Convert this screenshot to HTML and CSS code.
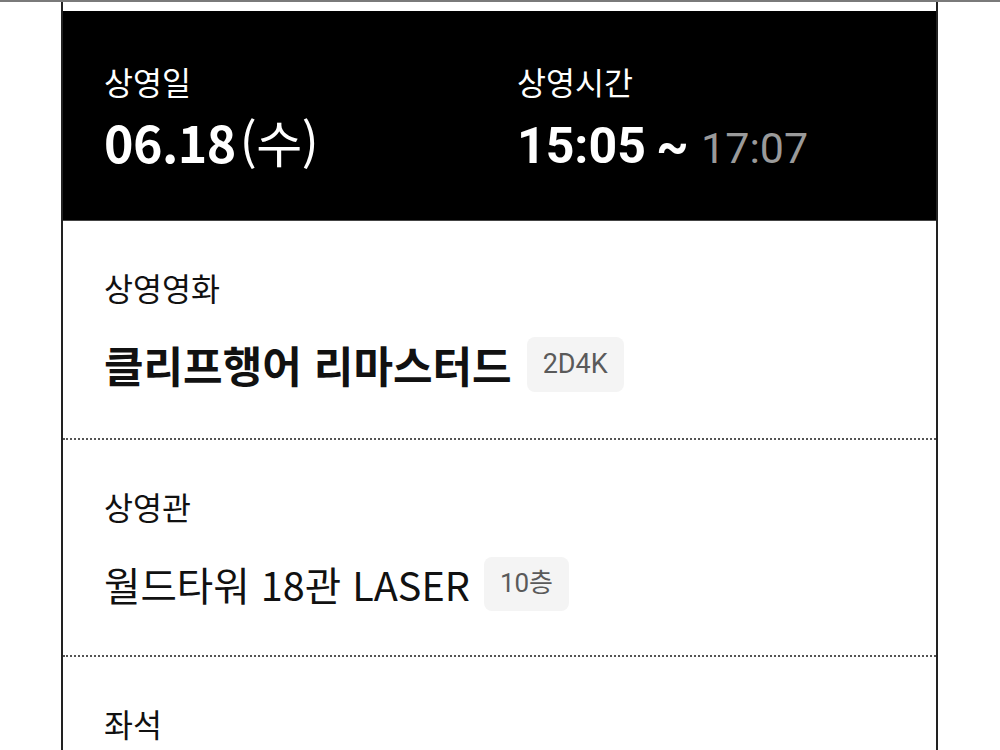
FILE: index.html
```html
<!DOCTYPE html>
<html lang="ko">
<head>
<meta charset="utf-8">
<link rel="stylesheet" href="styles.css">
</head>
<body>
<div class="topline"></div>
<div class="card">
  <div class="hero">
    <div class="hero-col">
      <div class="hero-label">상영일</div>
      <div class="hero-value">06.18<span class="paren">(수)</span></div>
    </div>
    <div class="hero-col">
      <div class="hero-label">상영시간</div>
      <div class="hero-value time">15:05 <span class="tilde">~</span> <span class="end">17:07</span></div>
    </div>
  </div>
  <div class="section dotted">
    <div class="label">상영영화</div>
    <div class="value bold">클리프행어 리마스터드<span class="badge">2D4K</span></div>
  </div>
  <div class="section dotted section-hall">
    <div class="label">상영관</div>
    <div class="value">월드타워 18관 LASER<span class="badge badge-floor">10층</span></div>
  </div>
  <div class="section">
    <div class="label">좌석</div>
  </div>
</div>
</body>
</html>
```
FILE: styles.css
```css
html, body {
  margin: 0;
  padding: 0;
  background: #fff;
  font-family: "Noto Sans CJK KR", "Noto Sans", sans-serif;
  color: #111;
  overflow: hidden;
}
.topline {
  height: 2px;
  background: #7a7a7a;
}
.card {
  margin-left: 61px;
  width: 873px;
  border-left: 2px solid #222;
  border-right: 2px solid #222;
  padding-top: 9px;
  min-height: 800px;
}
.hero {
  background: #000;
  color: #fff;
  display: grid;
  grid-template-columns: 413px 1fr;
  padding: 0 41px;
  height: 209px;
  align-content: start;
  border-bottom: 1px solid #444;
}
.hero-col {
  padding-top: 50px;
}
.hero-label {
  font-size: 31.5px;
  line-height: 40px;
}
.hero-value {
  font-size: 50px;
  font-weight: 700;
  line-height: 66px;
  margin-top: 7px;
  letter-spacing: -0.5px;
}
.time {
  font-family: Roboto, "Noto Sans CJK KR", sans-serif;
  font-size: 50px;
  letter-spacing: 0;
  margin-top: 12px;
}
.paren {
  font-weight: 400;
  margin-left: 4px;
}
.tilde {
  font-size: 50px;
  margin: 0 0 0 -2px;
}
.end {
  font-weight: 400;
  font-size: 43px;
  color: #9a9a9a;
}
.section {
  padding: 46px 41px 46px;
}
.section-hall {
  padding-bottom: 44px;
}
.dotted {
  border-bottom: 2px dotted #555;
}
.label {
  font-size: 31.5px;
  line-height: 40px;
}
.value {
  margin-top: 30px;
  font-size: 39.6px;
  line-height: 55px;
  display: flex;
  align-items: center;
}
.value.bold {
  font-weight: 700;
  font-size: 43px;
}
.badge {
  margin-left: 15px;
  background: #f4f4f4;
  color: #5a5a5a;
  font-family: Roboto, "Noto Sans CJK KR", sans-serif;
  font-size: 27px;
  font-weight: 400;
  height: 55px;
  padding: 0 16px;
  border-radius: 8px;
  display: inline-flex;
  align-items: center;
}
.badge-floor {
  font-size: 26px;
  height: 54px;
  padding: 0 16px;
  margin-left: 14px;
}
```
